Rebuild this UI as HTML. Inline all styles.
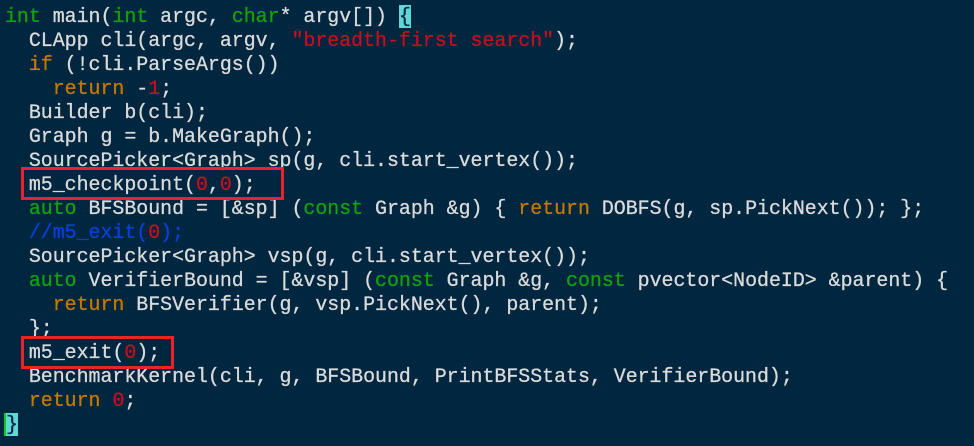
<!DOCTYPE html>
<html><head><style>
body{margin:0;width:974px;height:446px;background:#012640;overflow:hidden;}
pre{margin:0;position:absolute;left:5px;top:5px;font-family:"Liberation Mono",monospace;font-size:19.9px;line-height:24px;color:#dadada;-webkit-text-stroke:0.3px currentColor;}
.g{color:#13a10e}.o{color:#c17a00}.r{color:#c50f1f}.b{color:#0a3fd8}
.cur{background:#61d6d6;color:#012640;display:inline-block;height:23px;line-height:24px;vertical-align:top}
.box{position:absolute;border:3px solid #e8242b;}
</style></head><body>
<pre><span class="g">int</span> main(<span class="g">int</span> argc, <span class="g">char</span>* argv[]) <span class="cur">{</span>
  CLApp cli(argc, argv, <span class="r">"breadth-first search"</span>);
  <span class="o">if</span> (!cli.ParseArgs())
    <span class="o">return</span> -<span class="r">1</span>;
  Builder b(cli);
  Graph g = b.MakeGraph();
  SourcePicker&lt;Graph&gt; sp(g, cli.start_vertex());
  m5_checkpoint(<span class="r">0</span>,<span class="r">0</span>);
  <span class="g">auto</span> BFSBound = [&amp;sp] (<span class="g">const</span> Graph &amp;g) { <span class="o">return</span> DOBFS(g, sp.PickNext()); };
  <span class="b">//m5_exit(<span class="r">0</span>);</span>
  SourcePicker&lt;Graph&gt; vsp(g, cli.start_vertex());
  <span class="g">auto</span> VerifierBound = [&amp;vsp] (<span class="g">const</span> Graph &amp;g, <span class="g">const</span> pvector&lt;NodeID&gt; &amp;parent) {
    <span class="o">return</span> BFSVerifier(g, vsp.PickNext(), parent);
  };
  m5_exit(<span class="r">0</span>);
  BenchmarkKernel(cli, g, BFSBound, PrintBFSStats, VerifierBound);
  <span class="o">return</span> <span class="r">0</span>;
<span class="cur" style="border-left:2px solid #16c60c;margin-left:-1px">}</span></pre>
<div class="box" style="left:21px;top:167px;width:257px;height:27px"></div>
<div class="box" style="left:21px;top:336px;width:147px;height:27px"></div>
</body></html>
